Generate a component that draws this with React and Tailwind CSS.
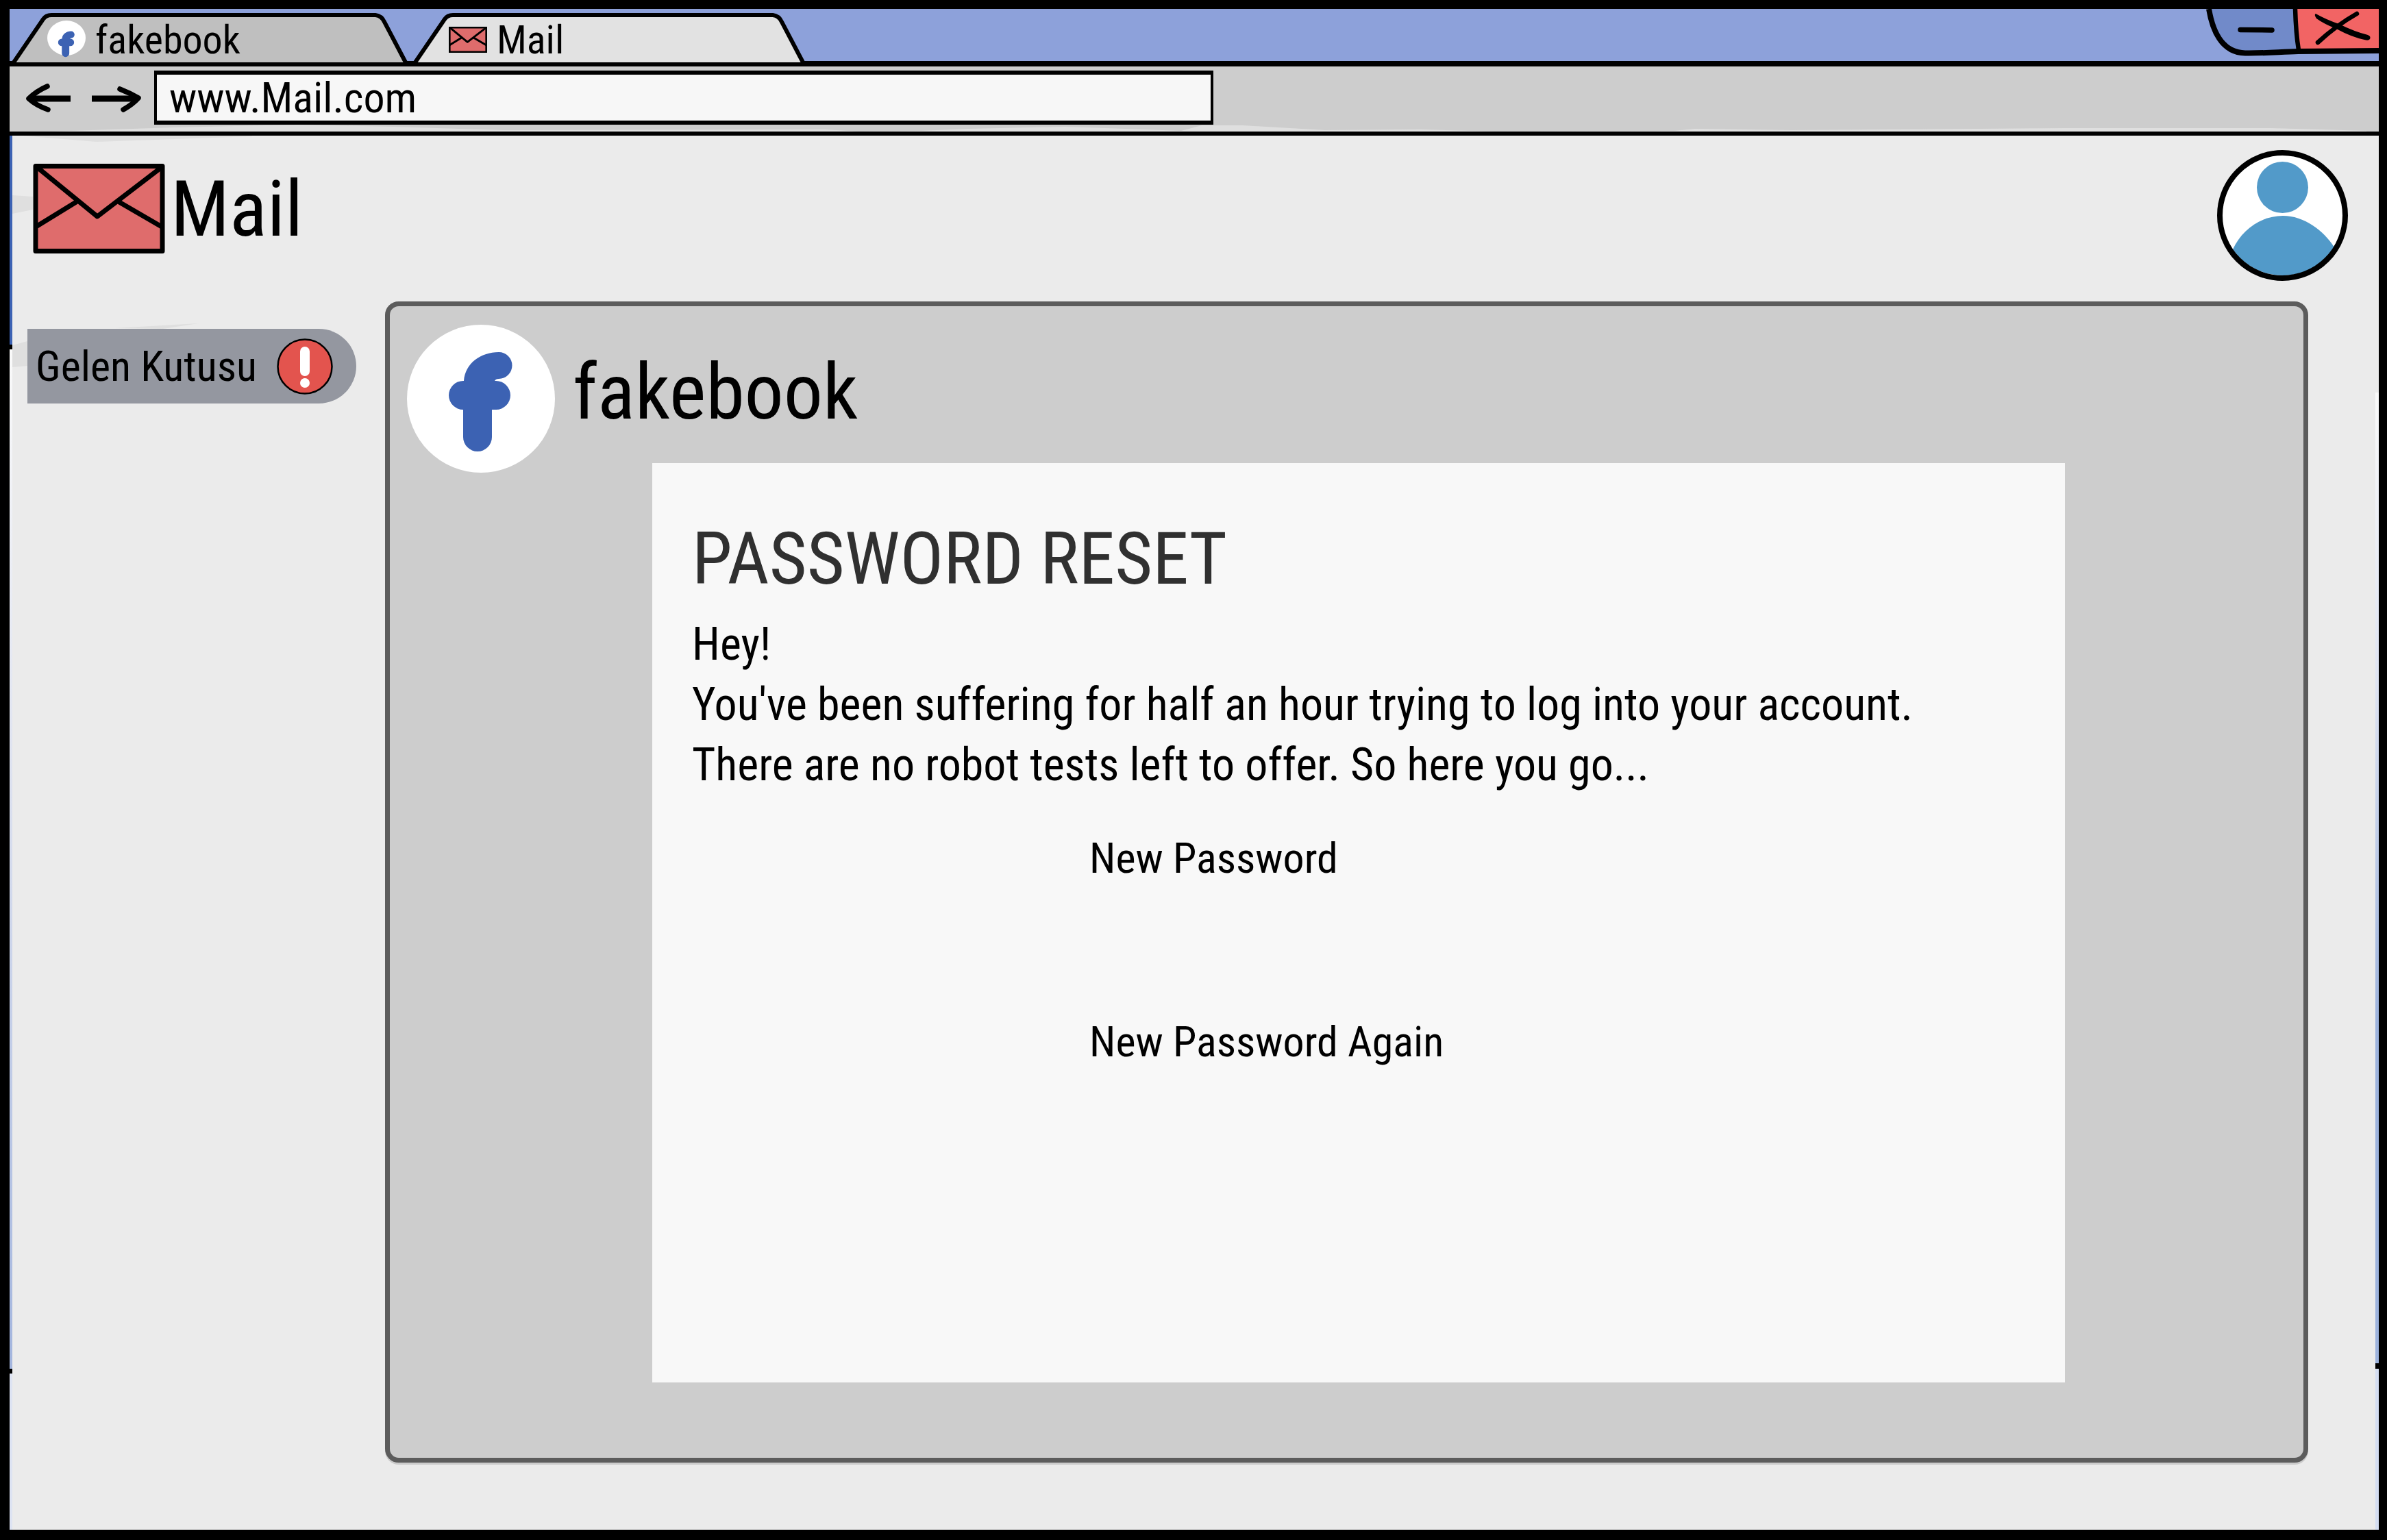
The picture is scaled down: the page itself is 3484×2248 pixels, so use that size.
function FakebookLogo({ className, small }) {
  return (
    <svg viewBox="0 0 216 216" className={className} aria-hidden="true">
      <ellipse cx="108" cy={small ? 98 : 108} rx="108" ry={small ? 98 : 108} fill="#ffffff" />
      <path
        transform={small ? "translate(0 20)" : undefined}
        fill="#3c62b3"
        d="M83 82 C85 56 108 40 134 40 A19.5 19.5 0 0 1 134 79 C131 79 129 80 128 82 L130 82 A21 21 0 0 1 130 124 L124 124 L124 164 A21 21 0 0 1 82 164 L82 124 A21 21 0 0 1 82 82 Z"
      />
    </svg>
  );
}

function Envelope({ className, stroke }) {
  return (
    <svg viewBox="0 0 193 131" className={className} aria-hidden="true">
      <g stroke="#000000" strokeWidth={stroke} strokeLinejoin="round" strokeLinecap="round" fill="none">
        <rect x="4" y="3.5" width="185" height="124" fill="#df6c6c" />
        <path d="M6 5 L94 77 L188 5 M63 56 L6 91 M126 56 L188 92" />
      </g>
    </svg>
  );
}

function Tab({ width, fill, selected, className, children }) {
  return (
    <button
      type="button"
      role="tab"
      aria-selected={selected}
      className={"relative flex h-[70px] items-center gap-[14px] pt-2 pl-[55px] text-[58px] leading-none " + className}
    >
      <svg
        viewBox={`0 0 ${width} 70`}
        className="absolute inset-0 h-full w-full overflow-visible"
        aria-hidden="true"
      >
        <path
          d={`M6 72 L49 9 Q53 3 61 3 L${width - 48} 3 Q${width - 39} 4 ${width - 35} 13 L${width - 4} 72`}
          fill={fill}
          stroke="#000000"
          strokeWidth="6"
        />
      </svg>
      {children}
    </button>
  );
}

function WindowControls() {
  return (
    <div className="ml-auto flex">
      <button type="button" aria-label="Minimize" className="w-[132px]">
        <svg viewBox="0 0 132 76" className="block h-[76px] w-full overflow-visible" aria-hidden="true">
          <path d="M4 0 C9 30 22 64 57 64.500 C84 65 110 62.500 134 62.500 L134 0 Z" fill="#718ac9" />
          <path d="M4 0 C9 30 22 64 57 64.500 C84 65 110 62.500 134 62" fill="none" stroke="#000000" strokeWidth="8" />
          <path d="M50 30.500 L96 31" stroke="#000000" strokeWidth="7.500" strokeLinecap="round" />
        </svg>
      </button>
      <button type="button" aria-label="Close" className="w-[120px]">
        <svg viewBox="0 0 120 76" className="block h-[76px] w-full overflow-visible" aria-hidden="true">
          <path d="M0 0 L120 0 L120 61 L4 61 Z" fill="#f26464" />
          <path d="M0 62 L120 61" stroke="#000000" strokeWidth="8" />
          <path d="M-2 0 Q-1 35 3 60" fill="none" stroke="#000000" strokeWidth="6.500" />
          <path d="M28 7 Q44 16 62 22 Q84 33 104 38 Q109 40 107 44 Q105 47 99 45 Q80 41 58 29 Q40 22 29 14 Q25 8 28 7 Z" fill="#000000" />
          <path d="M88 7 Q58 24 31 49" fill="none" stroke="#000000" strokeWidth="6.500" strokeLinecap="round" />
        </svg>
      </button>
    </div>
  );
}

function Toolbar() {
  return (
    <div className="border-b-[6px] border-black bg-[#cdcdcd] pt-[6px]">
      <div className="flex items-center pl-[23px]">
        <button type="button" aria-label="Back" className="mr-[31px]">
          <svg viewBox="0 0 66 42" className="h-[42px] w-[66px]" fill="none" stroke="#000000" strokeLinecap="round" aria-hidden="true">
            <path d="M6 22 L66 22" strokeWidth="9" strokeLinecap="butt" />
            <path d="M32 4 Q16 11 5 22 Q16 32 33 38" strokeWidth="7.500" strokeLinejoin="round" />
          </svg>
        </button>
        <button type="button" aria-label="Forward" className="mr-[18px]">
          <svg viewBox="0 0 73 42" className="h-[42px] w-[73px]" fill="none" stroke="#000000" strokeLinecap="round" aria-hidden="true">
            <path d="M0 22 L66 22" strokeWidth="9" strokeLinecap="butt" />
            <path d="M41 8 Q56 14 68 21 Q60 30 46 38" strokeWidth="7.500" strokeLinejoin="round" />
          </svg>
        </button>
        <input
          type="text"
          aria-label="Address"
          defaultValue="www.Mail.com"
          className="h-[79px] w-[45%] border-x-4 border-y-[6px] border-black bg-[#f7f7f7] pl-[18px] text-[62px] leading-none outline-none"
        />
      </div>
      <svg viewBox="0 0 3458 10" preserveAspectRatio="none" className="block h-[10px] w-full" aria-hidden="true">
        <path
          fill="#dfdfdf"
          d="M60 10 L240 4 L420 0 L560 3 L720 8 L1190 7 L1240 10 L1330 9 L1400 6 L1540 3 L1600 5 L1710 9 L1740 1 L1800 1 L1920 8 L2060 7 L2170 10 L2430 9 L2460 6 L2600 8 L3000 5 L3300 5 L3440 9 L3440 10 Z"
        />
      </svg>
    </div>
  );
}

function UserAvatar() {
  return (
    <button type="button" aria-label="Account" className="rounded-full">
      <svg viewBox="0 0 191 191" className="block h-[191px] w-[191px]" aria-hidden="true">
        <circle cx="95.500" cy="95.500" r="91" fill="#ffffff" />
        <circle cx="95.500" cy="54.500" r="37.500" fill="#529ac9" />
        <path d="M23 145 C36 116 65 96 96 96 C127 96 155 117 171 142 A89 89 0 0 1 23 145 Z" fill="#529ac9" />
        <circle cx="95.500" cy="95.500" r="91.500" fill="none" stroke="#000000" strokeWidth="8" />
      </svg>
    </button>
  );
}

function AlertBadge() {
  return (
    <svg viewBox="0 0 82 82" className="h-[82px] w-[82px]" role="img" aria-label="Unread mail">
      <circle cx="41" cy="41" r="39.500" fill="#e3544e" stroke="#000000" strokeWidth="2.500" />
      <rect x="34" y="12" width="14" height="43" rx="7" fill="#ffffff" />
      <circle cx="41" cy="65" r="7" fill="#ffffff" />
    </svg>
  );
}

function PasswordField({ id, label }) {
  return (
    <div className="flex flex-col">
      <label htmlFor={id} className="text-[62px] leading-[88px]">
        {label}
      </label>
      <input id={id} type="password" className="h-[120px] w-full bg-transparent outline-none" />
    </div>
  );
}

function MailMessage() {
  return (
    <main className="mr-[98px] mb-[98px] flex flex-1 flex-col rounded-[20px] border-[7px] border-[#5c5c5c] bg-[#cdcdcd] pr-[348px] pb-[110px] shadow-[0_3px_0_#cbcbcb]">
      <div className="flex items-center gap-[26px] pt-[27px] pl-[25px]">
        <FakebookLogo className="h-[216px] w-[216px]" />
        <h2 className="pb-5 text-[114px] leading-none">fakebook</h2>
      </div>
      <article className="-mt-[14px] ml-[383px] flex-1 bg-[#f8f8f8] pt-[87px] pl-[58px]">
        <h3 className="text-[106px] leading-none text-[#303030]">PASSWORD RESET</h3>
        <div className="mt-[28px] text-[66px] leading-[88px]">
          <p>Hey!</p>
          <p>You've been suffering for half an hour trying to log into your account.</p>
          <p>There are no robot tests left to offer. So here you go...</p>
        </div>
        <form className="mt-[48px] ml-[580px] flex w-[800px] flex-col gap-[60px]">
          <PasswordField id="new-password" label="New Password" />
          <PasswordField id="new-password-again" label="New Password Again" />
        </form>
      </article>
    </main>
  );
}

function LeftEdge() {
  return (
    <div className="flex w-1 shrink-0 flex-col" aria-hidden="true">
      <div className="grow-[305] bg-[#3c62b3]" />
      <div className="h-[7px] bg-black" />
      <div className="grow-[1488] bg-linear-to-b from-[#fafafa] via-[#dfe3f0] via-40% to-[#a3b5de]" />
      <div className="h-[7px] bg-black" />
      <div className="grow-[228] bg-[#dde3f2]" />
    </div>
  );
}

function RightEdge() {
  return (
    <div className="flex w-[5px] shrink-0 flex-col" aria-hidden="true">
      <div className="grow-[375]" />
      <div className="grow-[1417] bg-linear-to-b from-[#fafafa] via-[#dfe4f2] via-30% to-[#9db3dd] to-65%" />
      <div className="h-2 bg-black" />
      <div className="grow-[235] bg-[#d5def2]" />
    </div>
  );
}

export default function App() {
  return (
    <div className="flex min-h-screen flex-col border-t-[13px] border-r-[12px] border-b-[15px] border-l-[14px] border-black bg-[#ebebeb] font-['Roboto_Condensed',Roboto,sans-serif] text-black">
      <div className="flex h-[84px] border-b-8 border-black bg-[#8da1da]">
        <div role="tablist" className="flex gap-1 pt-[6px]">
          <Tab width={582} fill="#bfbfbf" selected={false} className="w-[582px]">
            <FakebookLogo small className="relative h-[56px] w-[56px]" />
            <span className="relative">fakebook</span>
          </Tab>
          <Tab width={576} fill="#e2e2e2" selected className="w-[576px]">
            <Envelope stroke={10} className="relative h-[38px] w-[56px]" />
            <span className="relative">Mail</span>
          </Tab>
        </div>
        <WindowControls />
      </div>
      <Toolbar />
      <div className="flex flex-1">
        <LeftEdge />
        <div className="relative flex flex-1 flex-col">
          <svg viewBox="0 0 400 340" className="absolute top-0 left-0 h-[340px] w-[400px]" fill="#dfdfdf" aria-hidden="true">
            <path d="M14 0 L123 9 L350 1 L350 0 Z M0 87 L30 89 L30 108 L0 114 Z M0 306 L22 300 L22 336 L0 338 Z M150 281 L272 274 L220 282 Z" />
          </svg>
          <header className="relative flex items-start justify-between pt-[21px] pr-10 pb-[30px] pl-[30px]">
            <div className="mt-5 flex items-center gap-2">
              <Envelope stroke={7} className="h-[131px] w-[193px]" />
              <h1 className="text-[114px] leading-[114px]">Mail</h1>
            </div>
            <UserAvatar />
          </header>
          <div className="flex flex-1">
            <nav className="relative w-[544px] shrink-0 pt-[40px] pr-[42px] pl-[22px]">
              <button
                type="button"
                className="flex h-[109px] w-full items-center justify-between rounded-l-[4px] rounded-r-full bg-[#9497a0] pr-[34px] pl-3 text-[62px] leading-none"
              >
                Gelen Kutusu
                <AlertBadge />
              </button>
            </nav>
            <MailMessage />
          </div>
        </div>
        <RightEdge />
      </div>
    </div>
  );
}
